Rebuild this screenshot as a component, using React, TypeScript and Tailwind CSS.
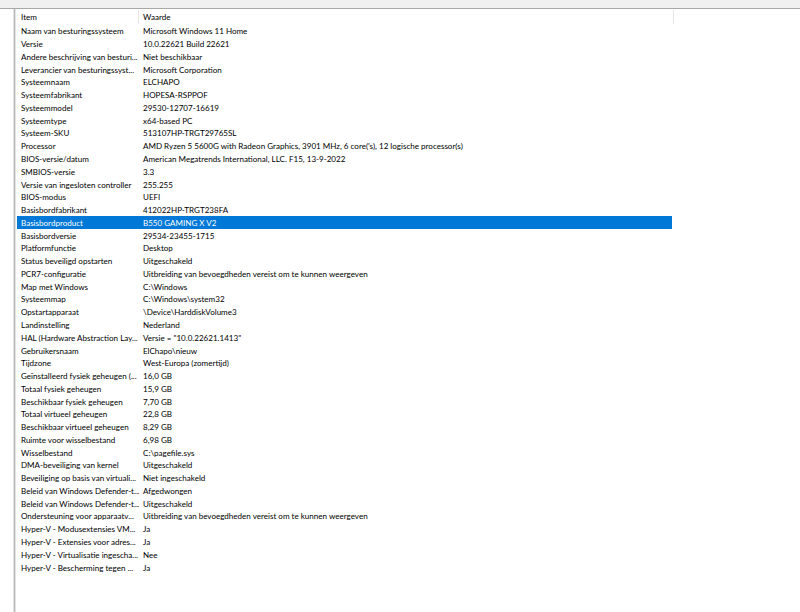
import React from "react";

const rows: [string, string][] = [
  ["Naam van besturingssysteem", "Microsoft Windows 11 Home"],
  ["Versie", "10.0.22621 Build 22621"],
  ["Andere beschrijving van besturi...", "Niet beschikbaar"],
  ["Leverancier van besturingssyst...", "Microsoft Corporation"],
  ["Systeemnaam", "ELCHAPO"],
  ["Systeemfabrikant", "HOPESA-RSPPOF"],
  ["Systeemmodel", "29530-12707-16619"],
  ["Systeemtype", "x64-based PC"],
  ["Systeem-SKU", "513107HP-TRGT29765SL"],
  ["Processor", "AMD Ryzen 5 5600G with Radeon Graphics, 3901 MHz, 6 core('s), 12 logische processor(s)"],
  ["BIOS-versie/datum", "American Megatrends International, LLC. F15, 13-9-2022"],
  ["SMBIOS-versie", "3.3"],
  ["Versie van ingesloten controller", "255.255"],
  ["BIOS-modus", "UEFI"],
  ["Basisbordfabrikant", "412022HP-TRGT238FA"],
  ["Basisbordproduct", "B550 GAMING X V2"],
  ["Basisbordversie", "29534-23455-1715"],
  ["Platformfunctie", "Desktop"],
  ["Status beveiligd opstarten", "Uitgeschakeld"],
  ["PCR7-configuratie", "Uitbreiding van bevoegdheden vereist om te kunnen weergeven"],
  ["Map met Windows", "C:\\Windows"],
  ["Systeemmap", "C:\\Windows\\system32"],
  ["Opstartapparaat", "\\Device\\HarddiskVolume3"],
  ["Landinstelling", "Nederland"],
  ["HAL (Hardware Abstraction Lay...", 'Versie = "10.0.22621.1413"'],
  ["Gebruikersnaam", "ElChapo\\nieuw"],
  ["Tijdzone", "West-Europa (zomertijd)"],
  ["Geïnstalleerd fysiek geheugen (...", "16,0 GB"],
  ["Totaal fysiek geheugen", "15,9 GB"],
  ["Beschikbaar fysiek geheugen", "7,70 GB"],
  ["Totaal virtueel geheugen", "22,8 GB"],
  ["Beschikbaar virtueel geheugen", "8,29 GB"],
  ["Ruimte voor wisselbestand", "6,98 GB"],
  ["Wisselbestand", "C:\\pagefile.sys"],
  ["DMA-beveiliging van kernel", "Uitgeschakeld"],
  ["Beveiliging op basis van virtuali...", "Niet ingeschakeld"],
  ["Beleid van Windows Defender-t...", "Afgedwongen"],
  ["Beleid van Windows Defender-t...", "Uitgeschakeld"],
  ["Ondersteuning voor apparaatv...", "Uitbreiding van bevoegdheden vereist om te kunnen weergeven"],
  ["Hyper-V - Modusextensies VM...", "Ja"],
  ["Hyper-V - Extensies voor adres...", "Ja"],
  ["Hyper-V - Virtualisatie ingescha...", "Nee"],
  ["Hyper-V - Bescherming tegen ...", "Ja"],
];

const SELECTED = 15;

export default function App() {
  return (
    <div className="flex h-[612px] w-[800px] flex-col overflow-hidden bg-white font-['Lato',sans-serif] text-[8.05px] text-black">
      {/* top splitter */}
      <div className="h-[8px] shrink-0 bg-[#f0f0f0]" />
      <div className="h-px shrink-0 bg-[#a8a8a8]" />

      <div className="flex min-h-0 flex-1">
        {/* left pane edge */}
        <div className="w-[13px] shrink-0 bg-white" />
        <div className="w-px shrink-0 bg-[#e3e3e3]" />
        <div className="w-px shrink-0 bg-[#b9b9b9]" />
        <div className="w-px shrink-0 bg-[#e3e3e3]" />

        {/* list view */}
        <div className="flex min-w-0 flex-1 flex-col pl-px">
          <div className="flex h-[16px] shrink-0 items-center leading-none">
            <div className="flex h-full w-[121px] shrink-0 items-center pl-[4px]">Item</div>
            <div className="h-[14px] w-px shrink-0 bg-[#e5e5e5]" />
            <div className="flex h-full w-[534px] shrink-0 items-center pl-[4px]">Waarde</div>
            <div className="h-[14px] w-px shrink-0 bg-[#e5e5e5]" />
          </div>

          {rows.map(([item, value], i) => (
            <div
              key={i}
              className={
                i === SELECTED
                  ? "flex h-[12.78px] w-[655px] shrink-0 items-center whitespace-nowrap bg-[#0078d7] leading-none text-white"
                  : "flex h-[12.78px] w-[655px] shrink-0 items-center whitespace-nowrap leading-none"
              }
            >
              <div className="w-[122px] shrink-0 overflow-hidden pl-[4px]">{item}</div>
              <div className="pl-[4px]">{value}</div>
            </div>
          ))}
        </div>
      </div>
    </div>
  );
}
